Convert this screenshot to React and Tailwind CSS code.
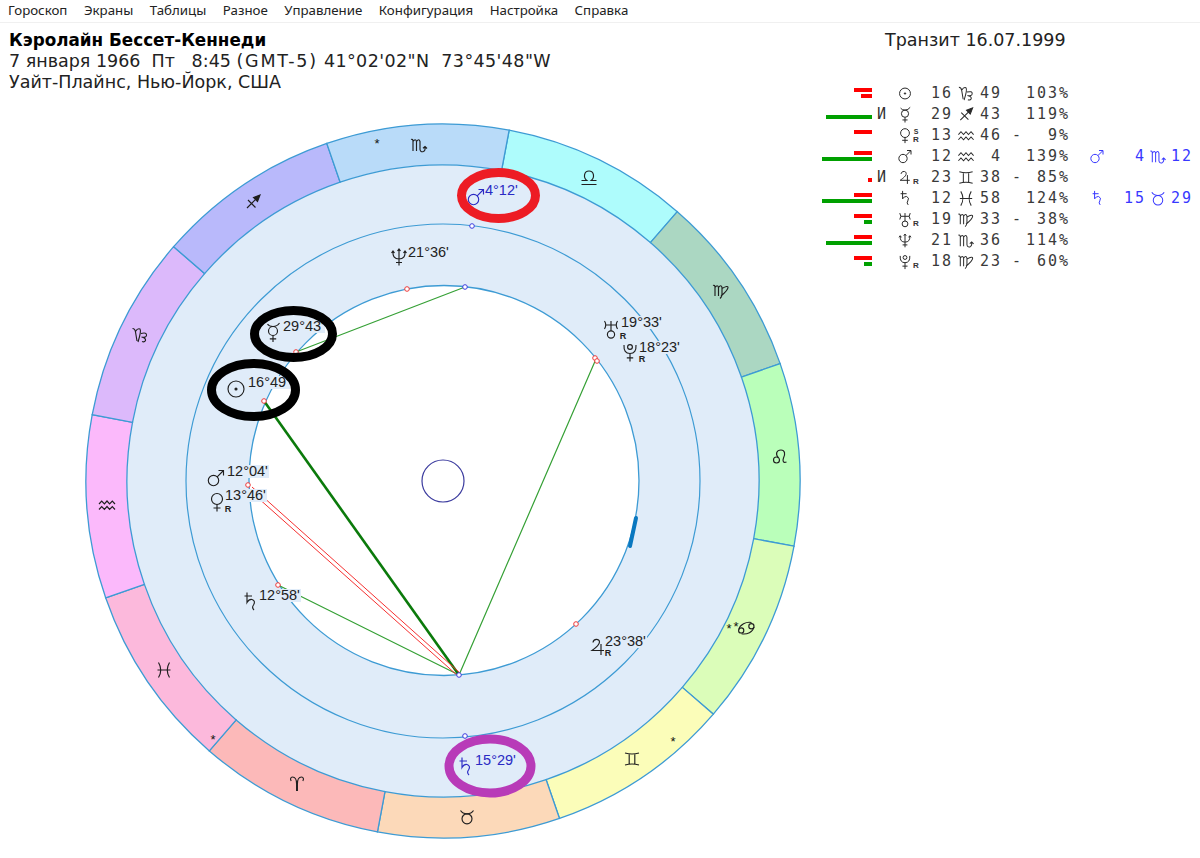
import React from 'react';

const CX = 443;
const CY = 481;

// outer end of each sector boundary, read off the wheel, going clockwise from libra
const signs = [
  { at: [509, 131], to: [677, 212], fill: '#aefcfc', g: 'libra', pos: [589, 178] },
  { at: [677, 212], to: [779, 364], fill: '#abd7c2', g: 'virgo', pos: [721, 291] },
  { at: [779, 364], to: [793, 546], fill: '#baffba', g: 'leo', pos: [780, 457] },
  { at: [793, 546], to: [712, 713], fill: '#dbfdb9', g: 'cancer', pos: [746, 628] },
  { at: [712, 713], to: [559, 817], fill: '#fbfdb9', g: 'gemini', pos: [632, 759] },
  { at: [559, 817], to: [378, 829], fill: '#fcd9b9', g: 'taurus', pos: [467, 817] },
  { at: [378, 829], to: [211, 749], fill: '#fcb9b9', g: 'aries', pos: [297, 784] },
  { at: [211, 749], to: [108, 597], fill: '#fcb9dc', g: 'pisces', pos: [164, 670] },
  { at: [108, 597], to: [94, 415], fill: '#fbb9fb', g: 'aquarius', pos: [107, 505] },
  { at: [94, 415], to: [174, 247], fill: '#dcb9fb', g: 'capricorn', pos: [140, 335] },
  { at: [174, 247], to: [327, 144], fill: '#b9b9fb', g: 'sagittarius', pos: [253, 202] },
  { at: [327, 144], to: [509, 131], fill: '#b9dbf9', g: 'scorpio', pos: [419, 145] },
];

const stars = [[377, 145], [729, 630], [736, 628], [673, 743], [213, 741]];

const onRadius = ([x, y], r) => {
  const a = Math.atan2(y - CY, x - CX);
  return [CX + r * Math.cos(a), CY + r * Math.sin(a)];
};

const sectorPath = (from, to) => {
  const [x1, y1] = onRadius(from, 357);
  const [x2, y2] = onRadius(to, 357);
  const [x3, y3] = onRadius(to, 316);
  const [x4, y4] = onRadius(from, 316);
  return `M${x1} ${y1}A357 357 0 0 1 ${x2} ${y2}L${x3} ${y3}A316 316 0 0 0 ${x4} ${y4}Z`;
};

const shapes = {
  sun: <><circle r="8" /><circle r="1" fill="currentColor" /></>,
  mercury: <><circle cy="-1" r="4.5" /><path d="M0 3.5V10M-3.2 6.8H3.2M-5.5 -8Q-4 -5.5 0 -5.5Q4 -5.5 6.5 -9" /></>,
  venus: <><circle cy="-3" r="5.5" /><path d="M0 2.5V9.5M-3.5 6H3.5" /></>,
  mars: <><circle cx="-2.5" cy="2.5" r="5.2" /><path d="M1.2 -1.2L7.5 -7.5M2.5 -7.5H7.5V-2.5" /></>,
  jupiter: <path d="M-5 -4.5C-4.5 -8.5 1.5 -8.5 1.5 -5C1.5 -2 -2.5 1 -6 3.5H6M3 -3V8" />,
  saturn: <path d="M-5.5 -6H2M-3 -9.5V0.5Q-1 -3 2 -2.5Q6 -1 3.5 3Q1.5 5.5 4 8" />,
  uranus: <><circle cy="5.5" r="3.6" /><path d="M-6.5 -8Q-4 -4 -6.5 0M6.5 -8Q4 -4 6.5 0M-5 -4H5M0 -8V2" /></>,
  neptune: <path d="M-6 -5.5Q-6.5 2 0 2Q6.5 2 6 -5.5M0 -8V8.5M-3 5.5H3M-7.5 -4L-6 -6L-4.5 -4M4.5 -4L6 -6L7.5 -4M-1.5 -6L0 -8L1.5 -6" />,
  pluto: <><circle cy="-5" r="2.4" /><path d="M-6 -7Q-6.5 1.5 0 1.5Q6.5 1.5 6 -7M0 1.5V9.5M-3.2 5.8H3.2" /></>,
  aries: <path d="M-0.4 7V0C-0.4 -4 -2 -7 -4.5 -7C-6.5 -7 -7 -4.5 -5.8 -3M0.4 7V0C0.4 -4 2 -7 4.5 -7C6.5 -7 7 -4.5 5.8 -3" />,
  taurus: <><circle cy="1.8" r="5" /><path d="M-6.5 -6.5Q-4.5 -3.2 0 -3.2Q4.5 -3.2 6.5 -6.5" /></>,
  gemini: <path d="M-7 -6Q0 -4 7 -6M-7 6Q0 4 7 6M-2.8 -4.8V4.8M2.8 -4.8V4.8" />,
  cancer: <><circle cx="-4.8" cy="2.4" r="2.6" /><circle cx="5.4" cy="-1.8" r="2.6" /><path d="M-7.2 1.5C-6 -3.5 0 -6.5 5.5 -5.5M8 -1C7 4 1 6.8 -4.5 5.8" /></>,
  leo: <><circle cx="-3.5" cy="3" r="3" /><path d="M-1.5 1C-5 -3 -3.5 -7 1 -7C5 -7 5.5 -3 3.5 1C2.5 3.5 3 6.5 6.5 5" /></>,
  virgo: <path d="M-8 -5.5Q-6 -6.5 -6 -3.5V5M-6 -3.5Q-3.5 -7 -2.5 -3.5V5M-2.5 -3.5Q0 -7 1 -3.5V3Q1 6 -1 7.5M1 -2.5Q7 -6 7 -3.5Q7 -1 0 5" />,
  libra: <path d="M-7.5 6.5H7.5M-7.5 2.5H-2.2C-6 -0.5 -5 -7 0 -7C5 -7 6 -0.5 2.2 2.5H7.5" />,
  scorpio: <path d="M-8 -5.5Q-6 -6.5 -6 -3.5V6M-6 -3.5Q-3.5 -7 -2.5 -3.5V6M-2.5 -3.5Q0 -7 1 -3.5V4.5Q1.5 7.5 4.5 6.5Q6.5 5.5 6 2M4 3.2L6 1.5L8 3.5" />,
  sagittarius: <><path d="M-6 6L6 -6M-5 -2L2.5 5.5" /><path d="M0.5 -4.5L7 -7L4.5 -0.5Z" fill="currentColor" /></>,
  capricorn: <path d="M-7.5 -6.5Q-5 -6.5 -4.5 -3L-3 6M-4.5 -3.5Q-2.5 -7 0 -6Q1.5 -4 -2 7M1 -1.5Q7 -3 6.5 0.5Q6 3 1.5 2Q6 3 5.5 5.5Q4.5 7.5 2 6.5" />,
  aquarius: <path d="M-8 -1L-5.3 -4L-2.6 -1L0 -4L2.6 -1L5.3 -4L8 -1M-8 4.5L-5.3 1.5L-2.6 4.5L0 1.5L2.6 4.5L5.3 1.5L8 4.5" />,
  pisces: <path d="M-5.5 -7.5Q-1 0 -5.5 7.5M5.5 -7.5Q1 0 5.5 7.5M-6.5 0H6.5" />,
};

const Glyph = ({ name, x, y, s = 1, color = '#1f1f1f', w = 1.15 }) => (
  <g
    transform={`translate(${x} ${y}) scale(${s})`}
    fill="none"
    stroke="currentColor"
    strokeWidth={w / s}
    style={{ color }}
  >
    {shapes[name]}
  </g>
);

const labels = [
  { g: 'neptune', x: 399, y: 257, tx: 408, ty: 257, t: "21°36'" },
  { g: 'mercury', x: 273, y: 332, tx: 283, ty: 331, t: "29°43'" },
  { g: 'sun', x: 236, y: 389, tx: 248, ty: 387, t: "16°49'" },
  { g: 'uranus', x: 611, y: 329, tx: 621, ty: 327, t: "19°33'", r: [623, 339] },
  { g: 'pluto', x: 630, y: 352, tx: 639, ty: 352, t: "18°23'", r: [642, 362] },
  { g: 'mars', x: 216, y: 478, tx: 227, ty: 476, t: "12°04'" },
  { g: 'venus', x: 217, y: 502, tx: 225, ty: 500, t: "13°46'", r: [228, 512] },
  { g: 'saturn', x: 250, y: 602, tx: 259, ty: 600, t: "12°58'" },
  { g: 'jupiter', x: 598, y: 647, tx: 605, ty: 646, t: "23°38'", r: [608, 656] },
  { g: 'mars', x: 476, y: 197, tx: 485, ty: 195, t: "4°12'", blue: true, nobg: true },
  { g: 'saturn', x: 465, y: 767, tx: 475, ty: 765, t: "15°29'", blue: true, nobg: true },
];

const redDots = [[407, 289], [296, 352], [264, 401], [248, 485], [278, 585], [595, 358], [597, 361], [576, 624]];
const blueDots = [[465, 287], [472, 226], [459, 675], [465, 736]];

const Wheel = () => (
  <svg className="block" width="820" height="758" viewBox="0 100 820 758">
    <circle cx={CX} cy={CY} r="316" fill="#e0ecf9" />
    {signs.map((s) => (
      <path key={s.g} d={sectorPath(s.at, s.to)} fill={s.fill} stroke="#3d9bd4" strokeWidth="1.3" />
    ))}
    <circle cx={CX} cy={CY} r="257" fill="none" stroke="#3d9bd4" strokeWidth="1.2" />
    <circle cx="444" cy="480.5" r="195" fill="#ffffff" stroke="#3d9bd4" strokeWidth="1.3" />
    <circle cx={CX} cy={CY} r="21" fill="none" stroke="#3a3a9e" strokeWidth="1.2" />
    <path d="M636 518L630 546" stroke="#0a78c0" strokeWidth="4" strokeLinecap="round" />

    <path d="M465 287L296 352" stroke="#35a035" strokeWidth="1.2" />
    <path d="M596 359L459 675M278 585L459 675" stroke="#35a035" strokeWidth="1.2" />
    <path d="M264 401L459 675" stroke="#0b7a0b" strokeWidth="2.6" />
    <path d="M248 489L458 676M252 487L460 673" stroke="#f53030" strokeWidth="1" fill="none" />

    {signs.map((s) => (
      <Glyph key={s.g} name={s.g} x={s.pos[0]} y={s.pos[1]} />
    ))}
    {stars.map(([x, y]) => (
      <text key={x} x={x} y={y + 3} textAnchor="middle" className="font-['Liberation_Sans'] text-[13px]" fill="#111">*</text>
    ))}

    {redDots.map(([x, y]) => (
      <circle key={x} cx={x} cy={y} r="2.3" fill="#fff" stroke="#f03a3a" strokeWidth="1" />
    ))}
    {blueDots.map(([x, y]) => (
      <circle key={y} cx={x} cy={y} r="2.3" fill="#fff" stroke="#3b3be0" strokeWidth="1" />
    ))}

    {labels.map((l) => (
      <g key={l.t}>
        {!l.nobg && <rect x={l.tx - 1} y={l.ty - 11} width="43" height="13" fill="#e0ecf9" />}
        <Glyph name={l.g} x={l.x} y={l.y} color={l.blue ? '#2a2ac4' : '#1f1f1f'} />
        <text x={l.tx} y={l.ty} className="font-['Liberation_Sans'] text-[14.5px]" fill={l.blue ? '#2a2ac4' : '#222222'}>{l.t}</text>
        {l.r && <text x={l.r[0]} y={l.r[1]} textAnchor="middle" className="font-['Liberation_Sans'] text-[9px] font-bold" fill="#222">R</text>}
      </g>
    ))}

    <ellipse cx="498.5" cy="195.5" rx="37" ry="23" fill="none" stroke="#ed1c24" strokeWidth="9" />
    <ellipse cx="293.5" cy="334" rx="39" ry="23.5" fill="none" stroke="#000" strokeWidth="9" />
    <ellipse cx="253.5" cy="390" rx="42" ry="26.5" fill="none" stroke="#000" strokeWidth="9" />
    <ellipse cx="490" cy="766" rx="41" ry="27" fill="none" stroke="#b83bb8" strokeWidth="9" />
  </svg>
);

const RED = '#ff0000';
const GREEN = '#00a000';

const rows = [
  { top: [RED, 18], low: [RED, 11], p: 'sun', deg: '16', sign: 'capricorn', min: '49', pct: '103%' },
  { low: [GREEN, 46], i: true, p: 'mercury', deg: '29', sign: 'sagittarius', min: '43', pct: '119%' },
  { top: [RED, 18], p: 'venus', r: 'SR', deg: '13', sign: 'aquarius', min: '46', dash: true, pct: '9%' },
  { top: [RED, 18], low: [GREEN, 50], p: 'mars', deg: '12', sign: 'aquarius', min: '4', pct: '139%', tr: { p: 'mars', deg: '4', sign: 'scorpio', min: '12' } },
  { low: [RED, 4], i: true, p: 'jupiter', r: 'R', deg: '23', sign: 'gemini', min: '38', dash: true, pct: '85%' },
  { top: [RED, 18], low: [GREEN, 50], p: 'saturn', deg: '12', sign: 'pisces', min: '58', pct: '124%', tr: { p: 'saturn', deg: '15', sign: 'taurus', min: '29' } },
  { top: [RED, 18], low: [GREEN, 8], p: 'uranus', r: 'R', deg: '19', sign: 'virgo', min: '33', dash: true, pct: '38%' },
  { top: [RED, 18], low: [GREEN, 46], p: 'neptune', deg: '21', sign: 'scorpio', min: '36', pct: '114%' },
  { top: [RED, 18], low: [GREEN, 8], p: 'pluto', r: 'R', deg: '18', sign: 'virgo', min: '23', dash: true, pct: '60%' },
];

const Bar = ({ bar }) => (
  <div className="h-[4px]" style={bar ? { width: bar[1], backgroundColor: bar[0] } : undefined} />
);

const SmallGlyph = ({ name, w, color = '#2a2a2a', cx, r, s = 0.8 }) => (
  <svg className="shrink-0 block" width={w} height="21" viewBox={`0 0 ${w} 21`}>
    <Glyph name={name} x={cx} y={10.5} s={name === 'sun' ? 0.68 : s} color={color} w={1} />
    {r === 'R' && <text x={cx + 12} y={17} textAnchor="middle" className="font-['Liberation_Sans'] text-[8px] font-bold" fill="#333">R</text>}
    {r === 'SR' && (
      <>
        <text x={cx + 12} y={9} textAnchor="middle" className="font-['Liberation_Sans'] text-[7px] font-bold" fill="#333">S</text>
        <text x={cx + 12} y={17} textAnchor="middle" className="font-['Liberation_Sans'] text-[8px] font-bold" fill="#333">R</text>
      </>
    )}
  </svg>
);

const Row = ({ row }) => (
  <div className="flex h-[21px] items-center font-['DejaVu_Sans_Mono'] text-[15px] tracking-[2px] text-[#3a3a3a] whitespace-pre">
    <div className="flex w-[52px] flex-col items-end gap-[2px]">
      <Bar bar={row.top} />
      <Bar bar={row.low} />
    </div>
    <div className="w-[23px] pl-[5px] text-[#333]">{row.i ? 'И' : ''}</div>
    <div className="w-[36px]">
      <SmallGlyph name={row.p} w={36} cx={10} r={row.r} />
    </div>
    <div className="w-[24px]">{row.deg}</div>
    <SmallGlyph name={row.sign} w={24} cx={11} s={0.95} />
    <div className="w-[23px] text-right">{row.min}</div>
    <div className="w-[21px] pl-[10px]">{row.dash ? '-' : ''}</div>
    <div className="w-[47px] text-right">{row.pct}</div>
    {row.tr && (
      <div className="flex items-center text-[#3838ff]">
        <SmallGlyph name={row.tr.p} w={54} cx={27} color="#3838ff" />
        <div className="w-[22px] text-right">{row.tr.deg}</div>
        <SmallGlyph name={row.tr.sign} w={24} cx={12} color="#3838ff" s={0.95} />
        <div className="w-[23px] text-right">{row.tr.min}</div>
      </div>
    )}
  </div>
);

const App = () => {
  const menu = ['Гороскоп', 'Экраны', 'Таблицы', 'Разное', 'Управление', 'Конфигурация', 'Настройка', 'Справка'];

  return (
    <div className="h-[858px] w-[1200px] overflow-hidden bg-white font-['DejaVu_Sans',sans-serif] text-[#222]">
      <div className="flex h-[23px] items-center gap-[16.5px] border-b border-[#f0f0f0] pl-2 font-['Noto_Sans',sans-serif] text-[13.3px] text-[#222]">
        {menu.map((m) => <span key={m}>{m}</span>)}
      </div>
      <div className="flex">
        <div className="w-[820px]">
          <div className="h-[77px] whitespace-pre pl-[9px] pt-[7px] text-[17.5px] leading-[21px]">
            <div className="text-[16.8px] font-bold text-black">Кэролайн Бессет-Кеннеди</div>
            <div>
              {'7 января 1966  Пт   8:45 '}
              <span className="tracking-[1.8px]">(GMT-5)</span>
              <span className="tracking-[0.4px]">{' 41°02\'02"N  73°45\'48"W'}</span>
            </div>
            <div>Уайт-Плайнс, Нью-Йорк, США</div>
          </div>
          <Wheel />
        </div>
        <div className="flex-1">
          <div className="pl-[65px] pt-[7px] text-[17.5px] leading-[21px]">Транзит 16.07.1999</div>
          <div className="mt-[31.5px]">
            {rows.map((r) => <Row key={r.p} row={r} />)}
          </div>
        </div>
      </div>
    </div>
  );
};

export default App;
